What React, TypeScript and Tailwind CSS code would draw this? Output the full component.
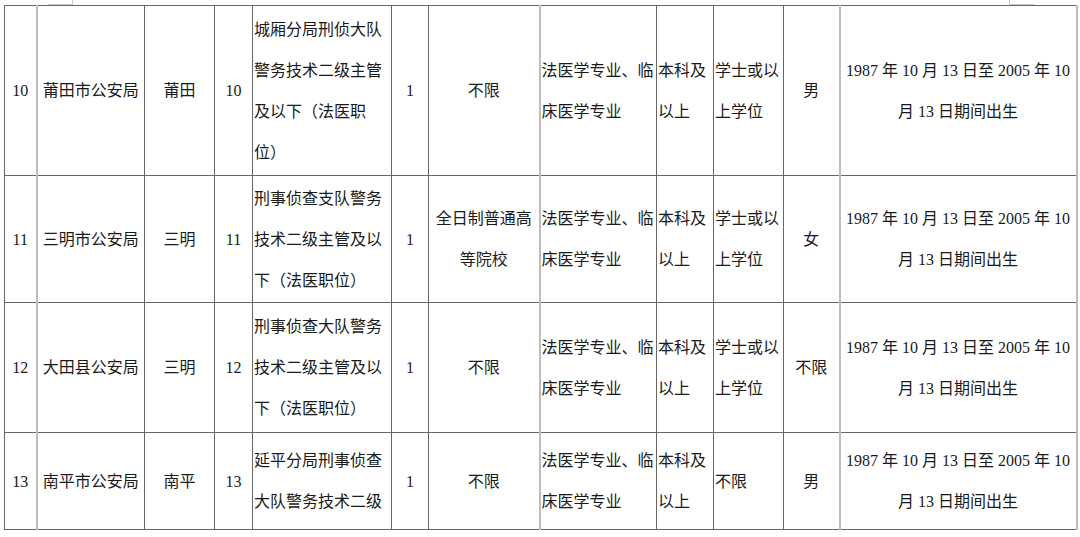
type Row = {
  no: string
  unit: string
  area: string
  code: string
  post: string
  num: string
  school: string
  major: string
  edu: string
  degree: string
  sex: string
  h: string
}

const rows: Row[] = [
  {
    no: "10",
    unit: "莆田市公安局",
    area: "莆田",
    code: "10",
    post: "城厢分局刑侦大队警务技术二级主管及以下（法医职位）",
    num: "1",
    school: "不限",
    major: "法医学专业、临床医学专业",
    edu: "本科及以上",
    degree: "学士或以上学位",
    sex: "男",
    h: "h-[170px]",
  },
  {
    no: "11",
    unit: "三明市公安局",
    area: "三明",
    code: "11",
    post: "刑事侦查支队警务技术二级主管及以下（法医职位）",
    num: "1",
    school: "全日制普通高等院校",
    major: "法医学专业、临床医学专业",
    edu: "本科及以上",
    degree: "学士或以上学位",
    sex: "女",
    h: "h-[127px]",
  },
  {
    no: "12",
    unit: "大田县公安局",
    area: "三明",
    code: "12",
    post: "刑事侦查大队警务技术二级主管及以下（法医职位）",
    num: "1",
    school: "不限",
    major: "法医学专业、临床医学专业",
    edu: "本科及以上",
    degree: "学士或以上学位",
    sex: "不限",
    h: "h-[130px]",
  },
  {
    no: "13",
    unit: "南平市公安局",
    area: "南平",
    code: "13",
    post: "延平分局刑事侦查大队警务技术二级",
    num: "1",
    school: "不限",
    major: "法医学专业、临床医学专业",
    edu: "本科及以上",
    degree: "不限",
    sex: "男",
    h: "h-[97px]",
  },
]

// dark hairlines, except a few lighter, thicker ones
const cell = "border border-[#666] p-0 align-middle"
const light = "border-r-2 border-r-[#bdbdbd]"

export default function App() {
  return (
    <div className="w-[1080px] h-[537px] overflow-hidden bg-white text-[#1a1a1a] font-['Liberation_Serif','Noto_Sans_CJK_SC',serif] text-[16px] leading-[41px] [text-spacing-trim:space-all]">
      {/* bits of the table above, peeking in */}
      <div className="flex h-[5px]">
        <div className="w-[48px]" />
        <div className="w-[25px] h-[5px] border-b border-r border-[#c8c8c8]" />
        <div className="w-[936px]" />
        <div className="w-[25px] h-[5px] border-b border-l border-[#c8c8c8]" />
      </div>
      <table className="ml-[4px] w-[1073px] table-fixed border-collapse">
        <colgroup>
          <col className="w-[32px]" />
          <col className="w-[108px]" />
          <col className="w-[70px]" />
          <col className="w-[38px]" />
          <col className="w-[139px]" />
          <col className="w-[37px]" />
          <col className="w-[111px]" />
          <col className="w-[117px]" />
          <col className="w-[57px]" />
          <col className="w-[70px]" />
          <col className="w-[56px]" />
          <col className="w-[237px]" />
        </colgroup>
        <tbody>
          {rows.map((r) => (
            <tr key={r.no}>
              <td className={`${cell} ${light} ${r.h} text-center`}>{r.no}</td>
              <td className={`${cell} text-center`}>{r.unit}</td>
              <td className={`${cell} text-center`}>{r.area}</td>
              <td className={`${cell} text-center`}>{r.code}</td>
              <td className={`${cell} text-left pl-px`}>{r.post}</td>
              <td className={`${cell} text-center`}>{r.num}</td>
              <td className={`${cell} ${light} text-center`}>{r.school}</td>
              <td className={`${cell} text-left pl-px`}>{r.major}</td>
              <td className={`${cell} text-left pl-px`}>{r.edu}</td>
              <td className={`${cell} text-left pl-px`}>{r.degree}</td>
              <td className={`${cell} ${light} text-center`}>{r.sex}</td>
              <td className={`${cell} ${light} text-center`}>
                1987 年 10 月 13 日至 2005 年 10 月 13 日期间出生
              </td>
            </tr>
          ))}
        </tbody>
      </table>
    </div>
  )
}
